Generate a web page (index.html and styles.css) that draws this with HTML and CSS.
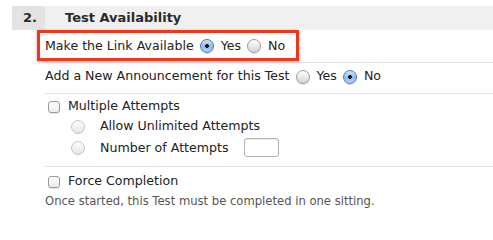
FILE: index.html
```html
<!DOCTYPE html>
<html>
<head>
<meta charset="utf-8">
<link rel="stylesheet" href="styles.css">
</head>
<body>
<div class="step">
  <div class="step-head">
    <span class="num">2.</span>
    <span class="title">Test Availability</span>
  </div>
  <div class="fields">
    <div class="row row-link">
      <div class="highlight">
        <span class="label">Make the Link Available</span>
        <span class="radio checked"></span><span class="opt">Yes</span>
        <span class="radio"></span><span class="opt">No</span>
      </div>
    </div>
    <div class="row row-announce">
      <div class="line">
        <span class="label">Add a New Announcement for this Test</span>
        <span class="radio"></span><span class="opt">Yes</span>
        <span class="radio checked"></span><span class="opt">No</span>
      </div>
    </div>
    <div class="row row-attempts">
      <div class="line">
        <span class="checkbox"></span><span class="label">Multiple Attempts</span>
      </div>
      <div class="line sub">
        <span class="radio disabled"></span><span class="label">Allow Unlimited Attempts</span>
      </div>
      <div class="line sub tall">
        <span class="radio disabled"></span><span class="label">Number of Attempts</span>
        <span class="textbox"></span>
      </div>
    </div>
    <div class="row row-force">
      <div class="line">
        <span class="checkbox"></span><span class="label">Force Completion</span>
      </div>
      <div class="help">Once started, this Test must be completed in one sitting.</div>
    </div>
  </div>
</div>
</body>
</html>
```

FILE: styles.css
```css
html, body {
  margin: 0;
  padding: 0;
  background: #ffffff;
}
body {
  padding-top: 6px;
  font-family: "DejaVu Sans", "Liberation Sans", sans-serif;
  font-size: 12.6px;
  line-height: 18px;
  color: #222222;
}
.step-head {
  display: flex;
  margin-left: 12px;
  height: 24px;
  line-height: 24px;
  background: #f0f0f0;
  font-weight: bold;
  font-size: 13px;
  color: #2b2b2b;
}
.num {
  width: 33px;
  box-sizing: border-box;
  padding-left: 11px;
  background: #e3e3e3;
}
.title {
  padding-left: 20px;
}
.fields {
  margin-left: 45px;
}
.row {
  border-bottom: 1px solid #e4e4e4;
}
.row-link {
  padding-bottom: 1px;
}
.highlight {
  display: inline-flex;
  align-items: center;
  box-sizing: border-box;
  height: 31px;
  margin-left: -8px;
  padding: 0 11px 0 5px;
  border: 3px solid #f2361c;
  box-shadow: 0 1px 3px rgba(0, 0, 0, 0.3);
}
.row-announce {
  padding: 4px 0 8px;
}
.row-attempts {
  padding: 3px 0 8px;
}
.row-force {
  border-bottom: none;
  padding-top: 5px;
}
.line {
  display: flex;
  align-items: center;
  height: 18px;
}
.line.sub {
  margin-top: 2px;
}
.line.tall {
  height: 21px;
}
.radio {
  display: inline-block;
  box-sizing: border-box;
  width: 14px;
  height: 14px;
  margin: 1px 7px 0 6px;
  border-radius: 50%;
  border: 1px solid #9c9c9c;
  background: linear-gradient(#ffffff, #e6e6e6 60%, #d4d4d4);
  box-shadow: 0 1px 1px rgba(0, 0, 0, 0.12);
  flex: none;
}
.radio.checked {
  border-color: #4f78ad;
  background: radial-gradient(circle at 50% 50%, #151515 0, #151515 1.6px, transparent 2.2px),
              linear-gradient(#cfe4fb, #8dbcef 55%, #b3d4f6);
}
.radio.disabled {
  border-color: #c4c4c4;
  background: linear-gradient(#ffffff, #efefef 60%, #e6e6e6);
  box-shadow: none;
}
.sub .radio {
  margin: 1px 15px 0 26px;
}
.checkbox {
  display: inline-block;
  box-sizing: border-box;
  width: 12px;
  height: 12px;
  margin: 2px 8px 0 3px;
  border-radius: 3px;
  border: 1px solid #9a9a9a;
  background: linear-gradient(#ffffff, #ececec);
  box-shadow: 0 1px 1px rgba(0, 0, 0, 0.1);
  flex: none;
}
.textbox {
  display: inline-block;
  box-sizing: border-box;
  width: 35px;
  height: 19px;
  margin-left: 15px;
  border: 1px solid #b3b3b3;
  border-radius: 3px;
  background: #ffffff;
  box-shadow: inset 0 1px 1px rgba(0, 0, 0, 0.08);
}
.help {
  margin-top: 2px;
  font-size: 11.6px;
  line-height: 18px;
  color: #555555;
}
```
